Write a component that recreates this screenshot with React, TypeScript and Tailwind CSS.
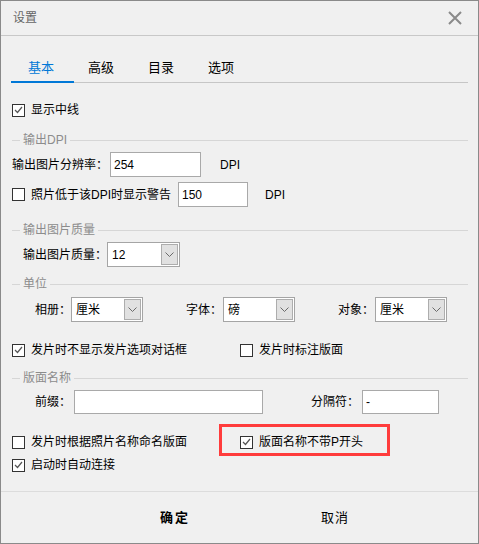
import type { ReactNode } from "react";

const font = "font-['Liberation_Sans','Noto_Sans_CJK_SC',sans-serif]";

function Check({ checked }: { checked?: boolean }) {
  return (
    <span className="flex h-[13px] w-[13px] shrink-0 items-center justify-center border border-[#333333] bg-white">
      {checked && (
        <svg width="9" height="8" viewBox="0 0 9 8">
          <path d="M1 4 L3.5 6.5 L8 1" fill="none" stroke="#555555" strokeWidth="1.2" />
        </svg>
      )}
    </span>
  );
}

function CheckRow({ checked, label }: { checked?: boolean; label: string }) {
  return (
    <div className="flex items-center">
      <Check checked={checked} />
      <span className="ml-[6px] whitespace-nowrap">{label}</span>
    </div>
  );
}

function Group({ title }: { title: string }) {
  return (
    <div className="flex h-[16px] items-center">
      <div className="h-px w-[8px] bg-[#d6d6d6]" />
      <span className="px-[3px] text-[#8c8c8c]">{title}</span>
      <div className="h-px flex-1 bg-[#d6d6d6]" />
    </div>
  );
}

function TextBox({ width, height, value }: { width: string; height: string; value?: string }) {
  return (
    <div className={`${width} ${height} flex items-center border border-[#a9a9a9] bg-white pl-[3px]`}>
      {value}
    </div>
  );
}

function Select({ width, value }: { width: string; value: string }) {
  return (
    <div className={`${width} flex h-[25px] items-center justify-between border border-[#a5a5a5] bg-white pl-[4px]`}>
      <span>{value}</span>
      <span className="mr-px flex h-[21px] w-[17px] items-center justify-center border border-[#adadad] bg-[#e1e1e1]">
        <svg width="9" height="5" viewBox="0 0 9 5">
          <path d="M0.5 0.5 L4.5 4.5 L8.5 0.5" fill="none" stroke="#6a6a6a" strokeWidth="1" />
        </svg>
      </span>
    </div>
  );
}

function Label({ width, children }: { width: string; children: ReactNode }) {
  return <span className={`${width} shrink-0 whitespace-nowrap`}>{children}</span>;
}

export default function App() {
  const tabs = ["基本", "高级", "目录", "选项"];

  return (
    <div className={`flex h-[544px] w-[479px] flex-col border border-[#8a8a8a] bg-[#f0f0f0] text-[12px] leading-none text-black ${font}`}>
      <div className="flex h-[35px] shrink-0 items-center justify-between border-b border-[#c8c8c8] pl-[12px] pr-[16px]">
        <span className="text-[#666666]">设置</span>
        <svg width="14" height="14" viewBox="0 0 14 14">
          <path d="M1 1 L13 13 M13 1 L1 13" stroke="#8a8a8a" strokeWidth="2" />
        </svg>
      </div>

      <div className="mx-[10px] mt-[16px] flex h-[31px] border-b border-[#c6c6c6] text-[13px]">
        {tabs.map((t, i) => (
          <div
            key={t}
            className={
              i === 0
                ? "relative flex h-[30px] w-[63px] items-center pl-[17px] text-[#0078d7]"
                : "flex h-[30px] w-[60px] items-center pl-[14px]"
            }
          >
            {t}
            {i === 0 && <span className="absolute -bottom-px left-0 right-0 h-[2px] bg-[#0078d7]" />}
          </div>
        ))}
      </div>

      <div className="flex flex-col pl-[11px] pr-[10px]">
        <div className="mt-[17px] flex h-[20px] items-center">
          <CheckRow checked label="显示中线" />
        </div>

        <div className="mt-[12px]">
          <Group title="输出DPI" />
        </div>
        <div className="mt-[4px] flex h-[25px] items-center">
          <Label width="w-[98px]">输出图片分辨率：</Label>
          <TextBox width="w-[91px]" height="h-[25px]" value="254" />
          <span className="ml-[19px]">DPI</span>
        </div>
        <div className="mt-[5px] flex h-[25px] items-center">
          <Check />
          <span className="ml-[6px] w-[147px] whitespace-nowrap">照片低于该DPI时显示警告</span>
          <TextBox width="w-[70px]" height="h-[25px]" value="150" />
          <span className="ml-[17px]">DPI</span>
        </div>

        <div className="mt-[15px]">
          <Group title="输出图片质量" />
        </div>
        <div className="mt-[4px] flex h-[25px] items-center pl-[11px]">
          <Label width="w-[84px]">输出图片质量：</Label>
          <Select width="w-[73px]" value="12" />
        </div>

        <div className="mt-[9px]">
          <Group title="单位" />
        </div>
        <div className="mt-[5px] flex h-[25px] items-center pl-[23px]">
          <Label width="w-[36px]">相册：</Label>
          <Select width="w-[72px]" value="厘米" />
          <span className="ml-[43px] w-[37px] whitespace-nowrap">字体：</span>
          <Select width="w-[72px]" value="磅" />
          <span className="ml-[43px] w-[37px] whitespace-nowrap">对象：</span>
          <Select width="w-[72px]" value="厘米" />
        </div>

        <div className="mt-[18px] flex h-[20px] items-center">
          <div className="w-[228px]">
            <CheckRow checked label="发片时不显示发片选项对话框" />
          </div>
          <CheckRow label="发片时标注版面" />
        </div>

        <div className="mt-[10px]">
          <Group title="版面名称" />
        </div>
        <div className="mt-[4px] flex h-[24px] items-center pl-[23px]">
          <Label width="w-[39px]">前缀：</Label>
          <TextBox width="w-[189px]" height="h-[24px]" />
          <span className="ml-[48px] w-[51px] whitespace-nowrap">分隔符：</span>
          <TextBox width="w-[77px]" height="h-[24px]" value="-" />
        </div>

        <div className="mt-[18px] flex h-[20px] items-center">
          <div className="w-[228px]">
            <CheckRow label="发片时根据照片名称命名版面" />
          </div>
          <div className="relative">
            <CheckRow checked label="版面名称不带P开头" />
            <span className="absolute -left-[21px] -top-[12px] h-[32px] w-[171px] border-[3px] border-[#ff3c3c]" />
          </div>
        </div>
        <div className="mt-[3px] flex h-[20px] items-center">
          <CheckRow checked label="启动时自动连接" />
        </div>
      </div>

      <div className="mt-auto flex h-[52px] shrink-0 items-center border-t border-[#dcdcdc] pl-[94px] text-[13px]">
        <div className="flex w-[160px] justify-center font-bold tracking-[2px]">确定</div>
        <div className="flex w-[160px] justify-center tracking-[1px]">取消</div>
      </div>
    </div>
  );
}
